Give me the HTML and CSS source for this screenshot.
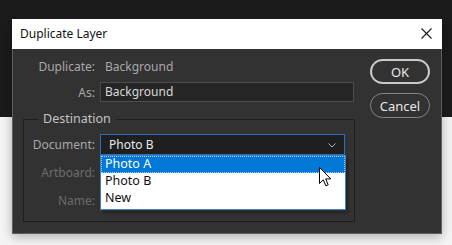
FILE: index.html
```html
<!DOCTYPE html>
<html lang="en">
<head>
  <meta charset="UTF-8" />
  <title>Duplicate Layer</title>
  <link rel="stylesheet" href="styles.css">
</head>
<body>

  <div class="dialog">
    <div class="titlebar">
      <span class="title">Duplicate Layer</span>
      <svg class="close" width="11" height="11" viewBox="0 0 11 11">
        <path d="M0.5 0.5 L10.5 10.5 M10.5 0.5 L0.5 10.5" stroke="#1a1a1a" stroke-width="1.1" fill="none" />
      </svg>
    </div>

    <div class="body">
      <div class="form">
        <div class="row">
          <span class="label">Duplicate:</span>
          <span class="value">Background</span>
        </div>
        <div class="row">
          <span class="label">As:</span>
          <div class="input">Background</div>
        </div>

        <div class="group">
          <span class="group-title">Destination</span>
          <div class="row">
            <span class="label">Document:</span>
            <div class="select focused">
              <span>Photo B</span>
              <svg class="chevron" width="8" height="5" viewBox="0 0 8 5">
                <path d="M0.5 0.5 L4 4 L7.5 0.5" stroke="#b0b0b0" stroke-width="1" fill="none" />
              </svg>
              <!-- open dropdown list -->
              <ul class="options">
                <li class="hover">Photo A</li>
                <li>Photo B</li>
                <li>New</li>
              </ul>
            </div>
          </div>
          <div class="row disabled">
            <span class="label">Artboard:</span>
            <div class="select"></div>
          </div>
          <div class="row disabled">
            <span class="label">Name:</span>
            <div class="input"></div>
          </div>
        </div>
      </div>

      <div class="buttons">
        <button class="btn primary">OK</button>
        <button class="btn">Cancel</button>
      </div>
    </div>
  </div>

  <svg class="cursor" width="13" height="21" viewBox="0 0 13 21">
    <path d="M0.5 0.5 L0.5 16.5 L4.3 12.8 L6.8 18.8 L9.2 17.8 L6.7 11.9 L11.8 11.9 Z" fill="#fff" stroke="#000" stroke-width="1" stroke-linejoin="round" />
  </svg>

</body>
</html>
```

FILE: styles.css
```css
/* Reset */
* {
  box-sizing: border-box;
  margin: 0;
  padding: 0;
}
body {
  font-family: 'Noto Sans', 'Open Sans', sans-serif;
  font-size: 12px;
  background: linear-gradient(#1b1b1b 0, #1b1b1b 117px, #f4f4f4 117px);
  height: 245px;
  padding: 19px 0 0 12px;
  overflow: hidden;
  position: relative;
}

.dialog {
  width: 430px;
  height: 215px;
  background: #323232;
  border: 1px solid #5e5e5e;
  border-top: none;
  box-shadow: 0 3px 10px rgba(0, 0, 0, 0.28);
}

.titlebar {
  height: 30px;
  background: #fff;
  display: flex;
  align-items: center;
  justify-content: space-between;
  padding: 0 10px 1px 8px;
  margin: 0 -1px;
}
.title {
  font-size: 12px;
  color: #111;
}

.body {
  display: flex;
  height: 184px;
}
.form {
  width: 342px;
  padding-top: 7px;
}

.row {
  display: grid;
  grid-template-columns: 82px 254px;
  column-gap: 5px;
  align-items: center;
  height: 20px;
}
.row + .row {
  margin-top: 6px;
}
.label {
  text-align: right;
  color: #a9a9a9;
}
.value {
  color: #a9a9a9;
  padding-left: 5px;
}
.input {
  height: 20px;
  background: #262626;
  border: 1px solid #4c4c4c;
  color: #d6d6d6;
  padding-left: 4px;
  line-height: 17px;
}

/* Destination group */
.group {
  position: relative;
  width: 332px;
  margin: 17px 0 0 10px;
  border: 1px solid #1e1e1e;
  padding: 14px 0 10px;
}
.group-title {
  position: absolute;
  top: -10px;
  left: 14px;
  padding: 0 5px;
  background: #323232;
  color: #c4c4c4;
  font-size: 12.5px;
}
.group .row {
  grid-template-columns: 71px 245px;
  height: 21px;
}
.group .row + .row {
  margin-top: 7px;
}
.group .input {
  height: 21px;
}
.row.disabled .label {
  color: #6c6c6c;
}

.select {
  position: relative;
  height: 21px;
  background: #262626;
  border: 1px solid #4c4c4c;
  color: #e8e8e8;
  padding: 0 8px;
  display: flex;
  align-items: center;
  justify-content: space-between;
}
.select.focused {
  background: #1f1f1f;
  border-color: #2f6db5;
}
.chevron {
  margin-top: 1px;
}

.options {
  position: absolute;
  top: 20px;
  left: -1px;
  width: 246px;
  list-style: none;
  background: #fff;
  border: 1px solid #3f7fbf;
  padding-bottom: 2px;
  box-shadow: 2px 3px 3px rgba(0, 0, 0, 0.35);
  z-index: 5;
}
.options li {
  height: 17px;
  line-height: 16px;
  padding-left: 4px;
  color: #111;
  font-size: 12.5px;
}
.options li.hover {
  background: #0078d7;
  color: #fff;
  outline: 1px dotted #a8d0f2;
  outline-offset: -1px;
}

/* Buttons */
.buttons {
  display: flex;
  flex-direction: column;
  gap: 9px;
  margin-left: 15px;
  padding-top: 10px;
}
.btn {
  width: 60px;
  height: 25px;
  border-radius: 13px;
  background: #323232;
  border: 1px solid #858585;
  color: #e6e6e6;
  font-family: 'Noto Sans', 'Open Sans', sans-serif;
  font-size: 13px;
}
.btn.primary {
  border: 2px solid #c9c9c9;
}

.cursor {
  position: absolute;
  left: 319px;
  top: 167px;
  z-index: 10;
}
```
